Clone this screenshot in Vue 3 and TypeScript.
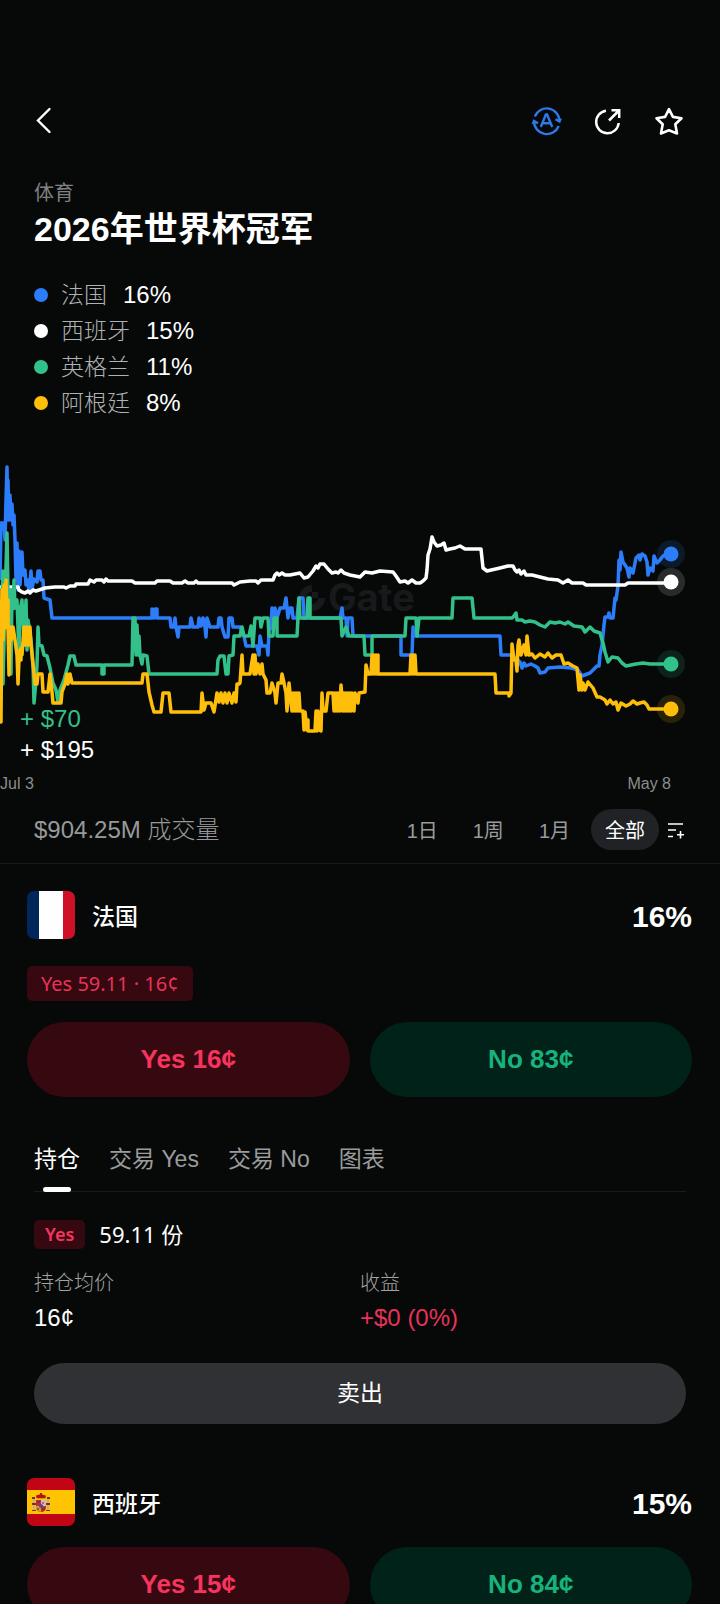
<script setup lang="ts">
import { ref } from 'vue'

interface Series {
  name: string
  chance: string
  color: string
  end: [number, number]
  points: string
}

const series: Series[] = [
  {
    name: '法国',
    chance: '16%',
    color: '#2c7dfa',
    end: [671, 554],
    points:
      '0,580 1,523 4,523 5,540 6,500 7,467 8,520 8,480 9,520 10,495 11,520 12,504 13,525 14,515 15,540 16,580 17,543 18,590 19,551 20,585 22,552 23,575 25,570 26,585 28,580 29,592 31,571 32,588 34,579 37,582 38,571 40,571 41,580 43,580 44,598 50,600 52,618 152,618 152,609 154,618 155,609 157,609 157,618 170,618 171,627 174,627 175,618 176,627 178,637 179,627 190,627 191,618 193,627 198,627 199,618 201,626 203,618 205,627 206,637 207,618 210,627 218,627 219,618 221,618 222,627 225,637 228,637 229,618 232,618 233,627 240,627 244,636 246,646 257,646 259,655 260,636 262,646 267,646 268,655 269,630 271,628 272,608 273,625 275,608 277,618 280,608 284,608 286,598 288,618 290,608 292,608 293,618 297,618 299,598 303,598 304,618 340,618 342,608 343,618 346,618 347,636 348,618 352,618 353,636 401,636 401,655 412,655 413,627 414,636 500,636 501,655 512,655 520,662 522,668 524,663 526,666 531,664 535,666 538,668 540,673 545,672 548,668 560,667 572,668 578,670 582,676 590,673 597,666 599,666 600,655 602,645 604,625 605,617 608,617 609,613 610,618 613,618 615,598 616,600 617,593 618,586 619,560 620,570 621,552 623,562 627,568 629,577 630,568 633,573 636,558 639,555 640,560 642,554 645,556 647,562 648,575 650,568 653,571 654,556 657,563 660,560 663,556 671,554',
  },
  {
    name: '西班牙',
    chance: '15%',
    color: '#ffffff',
    end: [671, 582],
    points:
      '0,587 18,587 19,590 22,592 25,593 28,591 30,593 33,590 36,591 45,588 55,587 64,587 66,588 70,586 75,586 76,584 88,584 90,580 92,581 94,582 96,580 102,580 104,582 106,579 108,581 132,581 135,583 155,583 157,581 170,581 173,583 182,583 185,581 188,583 194,583 196,581 198,583 232,583 234,585 238,583 240,582 250,581 256,581 258,583 261,580 273,580 275,575 277,573 279,575 282,573 285,575 290,575 300,573 304,578 308,577 313,571 316,566 318,568 320,564 324,564 328,569 332,573 336,572 338,573 341,570 344,573 350,575 360,577 365,572 372,573 380,571 393,572 396,576 400,582 405,581 408,583 412,580 416,583 420,583 423,581 426,578 427,570 428,555 430,549 432,537 434,542 437,546 441,545 444,543 446,550 450,549 455,548 460,546 465,549 481,549 483,568 487,571 500,568 508,566 513,566 515,570 517,572 519,570 521,574 524,571 526,575 532,575 540,577 548,579 558,580 563,583 568,580 572,583 583,583 586,585 625,585 628,583 671,583',
  },
  {
    name: '英格兰',
    chance: '11%',
    color: '#33c18b',
    end: [671, 664],
    points:
      '0,620 2,600 3,571 3,684 5,600 7,533 8,590 9,605 10,590 11,674 12,590 13,609 14,580 15,608 17,600 19,656 20,610 22,600 24,640 26,600 27,650 28,620 31,640 33,665 34,703 36,680 37,665 38,627 39,645 42,646 44,655 47,656 50,668 53,683 56,690 58,702 60,690 64,680 68,665 70,656 74,656 76,665 102,665 102,674 104,674 104,665 132,665 133,618 134,650 135,618 136,655 137,625 138,655 139,636 140,655 142,664 143,655 147,656 149,674 217,674 218,660 220,656 224,656 226,674 228,674 229,656 233,655 234,636 240,636 242,627 244,636 249,636 251,626 253,646 255,618 260,618 261,627 263,618 268,618 269,636 273,636 274,618 277,618 277,636 297,636 298,618 299,598 300,618 307,618 308,598 310,598 310,618 341,618 342,636 346,627 349,636 364,636 365,655 372,655 372,636 405,636 406,618 416,618 417,636 419,618 452,618 453,598 472,598 474,618 512,618 514,616 516,613 517,620 522,620 525,622 530,621 535,622 540,625 545,627 550,622 555,623 560,622 565,624 568,622 574,626 582,627 585,632 590,627 594,631 600,633 603,643 605,652 608,662 612,657 618,658 622,663 626,666 636,664 643,663 650,664 671,664',
  },
  {
    name: '阿根廷',
    chance: '8%',
    color: '#ffbe0a',
    end: [671, 709],
    points:
      '0,600 1,722 2,590 3,640 4,585 5,628 6,580 7,620 8,600 8,627 9,675 10,627 11,640 13,627 15,640 17,655 18,684 19,660 20,650 21,660 21,648 22,655 24,627 25,645 27,627 28,645 29,640 30,627 31,645 33,664 35,684 37,684 38,674 42,674 43,692 48,692 50,674 52,692 53,703 61,703 62,692 65,684 67,674 68,684 70,674 72,683 142,683 143,674 147,674 149,692 152,705 154,712 161,712 163,693 169,693 171,712 201,712 202,693 204,710 206,703 211,703 214,712 217,693 219,702 221,693 223,703 225,693 227,703 229,693 232,703 234,693 236,702 237,684 239,684 240,683 242,655 243,674 250,674 253,655 254,674 255,655 256,674 258,664 260,674 262,664 263,674 266,680 267,693 270,693 272,683 275,693 276,703 278,683 281,683 282,674 284,683 286,693 287,711 289,683 290,693 292,711 293,693 294,711 295,693 296,711 297,693 298,711 299,693 300,711 303,711 304,730 305,712 307,730 308,720 308,731 315,731 316,711 317,731 318,711 319,730 321,731 322,693 323,711 326,711 328,693 333,693 334,711 335,693 336,711 337,693 338,711 339,693 340,711 341,685 343,711 344,693 345,711 346,693 347,711 348,693 349,711 350,693 351,711 352,693 354,711 355,693 358,703 359,693 365,692 366,665 368,674 371,674 372,655 373,674 374,655 375,674 376,655 377,674 378,655 378,674 410,674 411,655 412,674 413,655 414,674 415,655 416,674 495,674 496,693 509,693 509,696 511,693 512,644 514,660 516,660 517,671 518,645 519,640 521,655 524,645 526,655 527,636 529,655 532,654 535,658 540,654 545,657 548,653 552,658 556,655 561,655 564,664 568,663 573,666 577,668 579,690 580,675 582,690 583,683 585,690 588,682 593,688 597,697 600,697 605,700 607,704 610,700 613,704 616,702 618,710 621,703 626,706 630,704 633,701 637,704 640,703 644,702 647,705 649,709 671,709',
  },
]

const ranges = ['1日', '1周', '1月', '全部']
const activeRange = ref('全部')

const tabs = ['持仓', '交易 Yes', '交易 No', '图表']
const activeTab = ref('持仓')
</script>

<template>
  <main class="page">
    <header class="topbar">
      <button class="icon-btn" type="button" aria-label="返回">
        <svg width="28" height="28" viewBox="0 0 28 28">
          <path d="M15.500 2 4 13.500 15.500 25" fill="none" stroke="#fff" stroke-width="2.400" stroke-linecap="round" />
        </svg>
      </button>
      <div class="actions">
        <button class="icon-btn" type="button" aria-label="翻译">
          <svg width="28" height="28" viewBox="0 0 28 28" fill="none" stroke="#2f78e8" stroke-width="2.400">
            <path d="M1.800 9.500A12.800 12.800 0 0 1 26.500 14M22.500 12.200l4 2.400 1.200-3.200" />
            <path d="M25.700 19A12.800 12.800 0 0 1 1 14.500M5 16.300l-4-2.400-1.200 3.200" />
            <path d="M7.800 20 12.900 7.500h1.200L19.200 20M9.500 16.200h8" />
          </svg>
        </button>
        <button class="icon-btn" type="button" aria-label="分享">
          <svg width="28" height="28" viewBox="0 0 28 28" fill="none" stroke="#fff" stroke-width="2.500">
            <path d="M12 3.700A11.300 11.300 0 1 0 24.700 16" />
            <path d="M15 13.500 24.500 4M17.500 3.300h7.700V11" />
          </svg>
        </button>
        <button class="icon-btn" type="button" aria-label="收藏">
          <svg width="28" height="28" viewBox="0 0 28 28" fill="none" stroke="#fff" stroke-width="2.600" stroke-linejoin="round">
            <path d="M14 2.200l3.900 7.700 8.600 1.300-6.200 6.100 1.700 9.200L14 23.300l-8 3.200 1.700-9.200-6.200-6.100 8.600-1.300z" />
          </svg>
        </button>
      </div>
    </header>

    <section class="intro">
      <p class="category">体育</p>
      <h1>2026年世界杯冠军</h1>
      <ul class="legend">
        <li v-for="s in series" :key="s.name">
          <i class="dot" :style="{ background: s.color }"></i>
          <span class="legend-name">{{ s.name }}</span>
          <span>{{ s.chance }}</span>
        </li>
      </ul>
    </section>

    <section class="chart">
      <svg class="plot" viewBox="0 450 720 310" role="img" aria-label="胜率走势">
        <g fill="#17191a">
          <path d="M312 585A13 13 0 1 0 325 598h-7a6 6 0 1 1-6-6z" />
          <path d="M312 592h6v6h-6z" />
          <text class="watermark" x="328" y="611">Gate</text>
        </g>
        <polyline
          v-for="s in series"
          :key="s.name"
          :points="s.points"
          :stroke="s.color"
          fill="none"
          stroke-width="3.500"
          stroke-linejoin="round"
        />
        <g v-for="s in series" :key="s.name" :fill="s.color">
          <circle :cx="s.end[0]" :cy="s.end[1]" r="14" opacity="0.140" />
          <circle :cx="s.end[0]" :cy="s.end[1]" r="7.500" />
        </g>
      </svg>
      <div class="trades">
        <span class="trade-green">+ $70</span>
        <span>+ $195</span>
      </div>
    </section>
    <div class="axis"><span>Jul 3</span><span>May 8</span></div>

    <section class="toolbar">
      <span class="volume">$904.25M 成交量</span>
      <div class="ranges">
        <button
          v-for="r in ranges"
          :key="r"
          type="button"
          class="range"
          :class="{ active: r === activeRange }"
          @click="activeRange = r"
        >{{ r }}</button>
      </div>
      <button class="filter" type="button" aria-label="图表设置">
        <svg width="20" height="20" viewBox="0 0 20 20" fill="none" stroke="#fff" stroke-width="1.600">
          <path d="M2 4h15M2 10h8M2 16.500h5M14.500 11v7.500M11 14.700h7" />
        </svg>
      </button>
    </section>

    <section class="market">
      <div class="market-head">
        <svg class="flag" viewBox="0 0 48 48" role="img" aria-label="法国国旗">
          <path fill="#00265a" d="M0 0h12v48H0z" />
          <path fill="#fff" d="M12 0h24v48H12z" />
          <path fill="#cf1126" d="M36 0h12v48H36z" />
        </svg>
        <h2>法国</h2>
        <strong class="chance">16%</strong>
      </div>
      <span class="holding">Yes 59.11 · 16¢</span>
      <div class="bets">
        <button class="bet yes" type="button">Yes 16¢</button>
        <button class="bet no" type="button">No 83¢</button>
      </div>
    </section>

    <section class="detail">
      <nav class="tabs">
        <button
          v-for="t in tabs"
          :key="t"
          type="button"
          class="tab"
          :class="{ active: t === activeTab }"
          @click="activeTab = t"
        >{{ t }}</button>
      </nav>
      <div class="position">
        <span class="side">Yes</span>
        <span class="shares">59.11 份</span>
      </div>
      <dl class="stats">
        <div>
          <dt>持仓均价</dt>
          <dd>16¢</dd>
        </div>
        <div>
          <dt>收益</dt>
          <dd class="profit">+$0 (0%)</dd>
        </div>
      </dl>
      <button class="sell" type="button">卖出</button>
    </section>

    <section class="market spain">
      <div class="market-head">
        <svg class="flag" viewBox="0 0 48 48" role="img" aria-label="西班牙国旗">
          <path fill="#c00614" d="M0 0h48v48H0z" />
          <path fill="#ffc400" d="M0 12h48v24H0z" />
          <path fill="#ad1519" d="M9 18c1-2 8-2 10 0l-1 3h-8zM13 15h2v3h-2z" />
          <path fill="#d99a10" d="M10 20h8v1h-8z" />
          <path fill="#b8b0a0" d="M6 21h2v11H6zM20 21h2v11h-2z" />
          <path fill="#8c2a1c" d="M5 19h3v2H5zM20 19h3v2h-3zM5 25h4v2H5zM19 25h4v2h-4zM5 32h4v1H5zM19 32h4v1h-4z" />
          <path fill="#b4303c" d="M9 22h10v7c0 3-2 5-5 5s-5-2-5-5z" />
          <path fill="#d8b8c0" d="M14 22h5v6h-5z" />
          <path fill="#d89a20" d="M9 28h5v6c-3 0-5-2-5-5z" />
          <circle cx="14" cy="28" r="2" fill="#5a4a8c" />
          <path d="M10 24h3M15 31h3M16 24v2M11 30v2" stroke="#70222a" />
        </svg>
        <h2>西班牙</h2>
        <strong class="chance">15%</strong>
      </div>
      <div class="bets">
        <button class="bet yes" type="button">Yes 15¢</button>
        <button class="bet no" type="button">No 84¢</button>
      </div>
    </section>
  </main>
</template>

<style>
html,
body {
  background: #060908;
}
</style>

<style scoped>
.page {
  box-sizing: border-box;
  height: 100vh;
  padding-top: 93px;
  overflow-x: hidden;
  overflow-y: auto;
  scrollbar-width: none;
  background: #060908;
  color: #fff;
  font-family: "Liberation Sans", "Noto Sans CJK SC", sans-serif;
  font-size: 23px;
}

button {
  padding: 0;
  border: 0;
  background: none;
  color: inherit;
  font: inherit;
  cursor: pointer;
}

h1,
h2,
p,
ul,
dl,
dd {
  margin: 0;
  padding: 0;
}

.topbar {
  display: flex;
  align-items: center;
  justify-content: space-between;
  height: 56px;
  padding: 0 37px 0 34px;
}

.actions {
  display: flex;
  gap: 33px;
}

.icon-btn {
  display: block;
  width: 28px;
  height: 28px;
}

.icon-btn svg,
.filter svg {
  display: block;
  overflow: visible;
}

.intro {
  padding: 32px 34px 29px;
}

.category {
  color: #808182;
  font-size: 20px;
  line-height: 24px;
}

h1 {
  margin-top: 2px;
  font-size: 34px;
  font-weight: 700;
  line-height: 44px;
}

.legend {
  margin-top: 26px;
  list-style: none;
}

.legend li {
  display: flex;
  align-items: center;
  height: 36px;
  font-size: 24px;
}

.dot {
  width: 14px;
  height: 14px;
  margin-right: 13px;
  border-radius: 50%;
}

.legend-name {
  margin-right: 16px;
  color: #b0b1b2;
  font-size: 23px;
  font-weight: 300;
  line-height: 32px;
}

.chart {
  position: relative;
}

.plot {
  display: block;
  width: 100%;
}

.watermark {
  font-family: Inter, sans-serif;
  font-size: 38px;
  font-weight: 700;
}

.trades {
  position: absolute;
  bottom: -5px;
  left: 20px;
  display: flex;
  flex-direction: column;
  font-size: 24px;
  line-height: 31px;
}

.trade-green {
  color: #33c18b;
}

.axis {
  display: flex;
  justify-content: space-between;
  margin-top: 14px;
  padding-right: 49px;
  color: #8b8c8d;
  font-size: 16px;
  line-height: 20px;
}

.toolbar {
  display: flex;
  align-items: center;
  padding: 15px 34px 13px;
  border-bottom: 1px solid #181b1b;
}

.volume {
  flex: 1;
  padding-bottom: 4px;
  color: #98999a;
  font-size: 24px;
  font-weight: 300;
}

.ranges {
  display: flex;
  gap: 7px;
}

.range {
  height: 41px;
  padding: 0 14px;
  border-radius: 21px;
  color: #9a9b9c;
  font-size: 20px;
}

.range.active {
  background: #212226;
  color: #fff;
}

.filter {
  margin-left: 7px;
}

.market {
  padding: 27px 28px 0 27px;
}

.market-head {
  display: flex;
  align-items: center;
  height: 48px;
}

.flag {
  width: 48px;
  height: 48px;
  border-radius: 7px;
}

h2 {
  flex: 1;
  margin-left: 17px;
  font-size: 23px;
  font-weight: 500;
}

.chance {
  padding-top: 3px;
  font-size: 30px;
}

.holding {
  display: inline-flex;
  align-items: center;
  height: 35px;
  margin-top: 27px;
  padding: 0 14px;
  border-radius: 5px;
  background: #36080f;
  color: #e8325a;
  font-family: "Noto Sans", "Noto Sans CJK SC", sans-serif;
  font-size: 20px;
}

.bets {
  display: grid;
  grid-template-columns: 1fr 1fr;
  gap: 20px;
  margin-top: 21px;
}

.bet {
  height: 75px;
  border-radius: 38px;
  font-size: 26px;
  font-weight: 700;
}

.yes {
  background: #36080f;
  color: #f6345f;
}

.no {
  background: #002218;
  color: #19b27c;
}

.detail {
  padding: 46px 34px 0;
}

.tabs {
  display: flex;
  gap: 29px;
  border-bottom: 1px solid #181b1b;
}

.tab {
  position: relative;
  padding-bottom: 16px;
  color: #9a9b9c;
  line-height: 32px;
}

.tab.active {
  color: #fff;
}

.tab.active::after {
  position: absolute;
  bottom: -1px;
  left: 50%;
  width: 28px;
  height: 5px;
  margin-left: -14px;
  border-radius: 3px;
  background: #fff;
  content: "";
}

.position {
  display: flex;
  align-items: center;
  gap: 14px;
  height: 29px;
  margin-top: 28px;
  font-family: "Noto Sans", "Noto Sans CJK SC", sans-serif;
  font-size: 22px;
}

.side {
  padding: 0 11px;
  border-radius: 5px;
  background: #36080f;
  color: #f6345f;
  font-size: 18px;
  font-weight: 600;
  line-height: 29px;
}

.shares {
  line-height: 29px;
}

.stats {
  display: grid;
  grid-template-columns: 1fr 1fr;
  margin-top: 22px;
}

dt {
  color: #a2a3a4;
  font-size: 20px;
  font-weight: 300;
  line-height: 24px;
}

dd {
  margin-top: 7px;
  font-size: 24px;
  line-height: 32px;
}

.profit {
  color: #e8325a;
}

.sell {
  width: 100%;
  height: 61px;
  margin-top: 29px;
  padding-bottom: 5px;
  border-radius: 31px;
  background: #303134;
}

.spain {
  padding-top: 54px;
}
</style>
